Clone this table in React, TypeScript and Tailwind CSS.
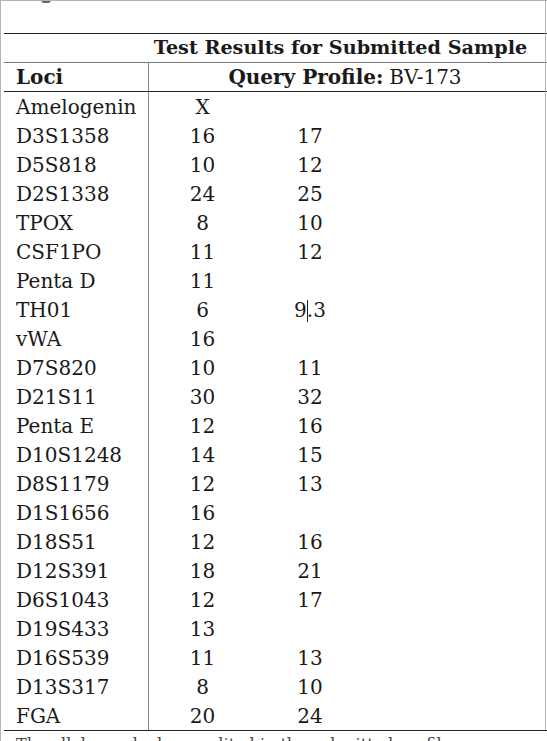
import React from "react";

const rows: [string, string, string][] = [
  ["Amelogenin", "X", ""],
  ["D3S1358", "16", "17"],
  ["D5S818", "10", "12"],
  ["D2S1338", "24", "25"],
  ["TPOX", "8", "10"],
  ["CSF1PO", "11", "12"],
  ["Penta D", "11", ""],
  ["TH01", "6", "9.3"],
  ["vWA", "16", ""],
  ["D7S820", "10", "11"],
  ["D21S11", "30", "32"],
  ["Penta E", "12", "16"],
  ["D10S1248", "14", "15"],
  ["D8S1179", "12", "13"],
  ["D1S1656", "16", ""],
  ["D18S51", "12", "16"],
  ["D12S391", "18", "21"],
  ["D6S1043", "12", "17"],
  ["D19S433", "13", ""],
  ["D16S539", "11", "13"],
  ["D13S317", "8", "10"],
  ["FGA", "20", "24"],
];

export default function App() {
  return (
    <div
      className="relative h-[741px] w-[547px] overflow-hidden bg-white border-t border-l border-[#b4b4b4] text-[#1a1a1a]"
      style={{ fontFamily: '"DejaVu Serif", "Liberation Serif", serif' }}
    >
      <div className="absolute left-[40px] top-[-4px] h-[6px] w-[10px] rounded-full bg-[#5a6a8a]" />
      <div className="absolute right-[1px] top-0 h-[729px] w-px bg-[#b4b4b4]" />
      <div className="pt-[32px] pl-[3px]">
        <div className="border-t-[1.5px] border-[#222]">
          <div className="grid h-[29px] grid-cols-[144px_1fr] border-b border-[#777]">
            <div />
            <div className="flex items-center justify-center pr-[14px] text-[19.2px] font-bold leading-none">
              Test Results for Submitted Sample
            </div>
          </div>
          <div className="grid h-[29px] grid-cols-[144px_1fr] border-b-[1.5px] border-[#222]">
            <div className="flex items-center pl-[12px] text-[20px] font-bold leading-none">Loci</div>
            <div className="flex items-center justify-center border-l border-[#888] pr-[6px] text-[20px] leading-none">
              <span className="font-bold">Query Profile:</span>
              <span className="ml-[6px]">BV-173</span>
            </div>
          </div>
          <div className="border-b-[1.5px] border-[#222]">
            {rows.map(([locus, a, b]) => (
              <div key={locus} className="grid h-[29px] grid-cols-[144px_108px_108px_1fr] text-[20px] leading-none">
                <div className="flex items-center pl-[12px]">{locus}</div>
                <div className="flex items-center justify-center border-l border-[#888]">{a}</div>
                <div className="flex items-center justify-center">
                  {b === "9.3" ? (
                    <span>
                      9<span className="relative inline-block w-0 align-middle"><span className="absolute left-0 top-[-11px] h-[22px] w-px bg-[#222]" /></span>.3
                    </span>
                  ) : (
                    b
                  )}
                </div>
                <div />
              </div>
            ))}
          </div>
        </div>
        <p className="mt-[6px] whitespace-nowrap pl-[12px] text-[16px] leading-none text-[#444]">
          The allele marked was edited in the submitted profile.
        </p>
      </div>
    </div>
  );
}
